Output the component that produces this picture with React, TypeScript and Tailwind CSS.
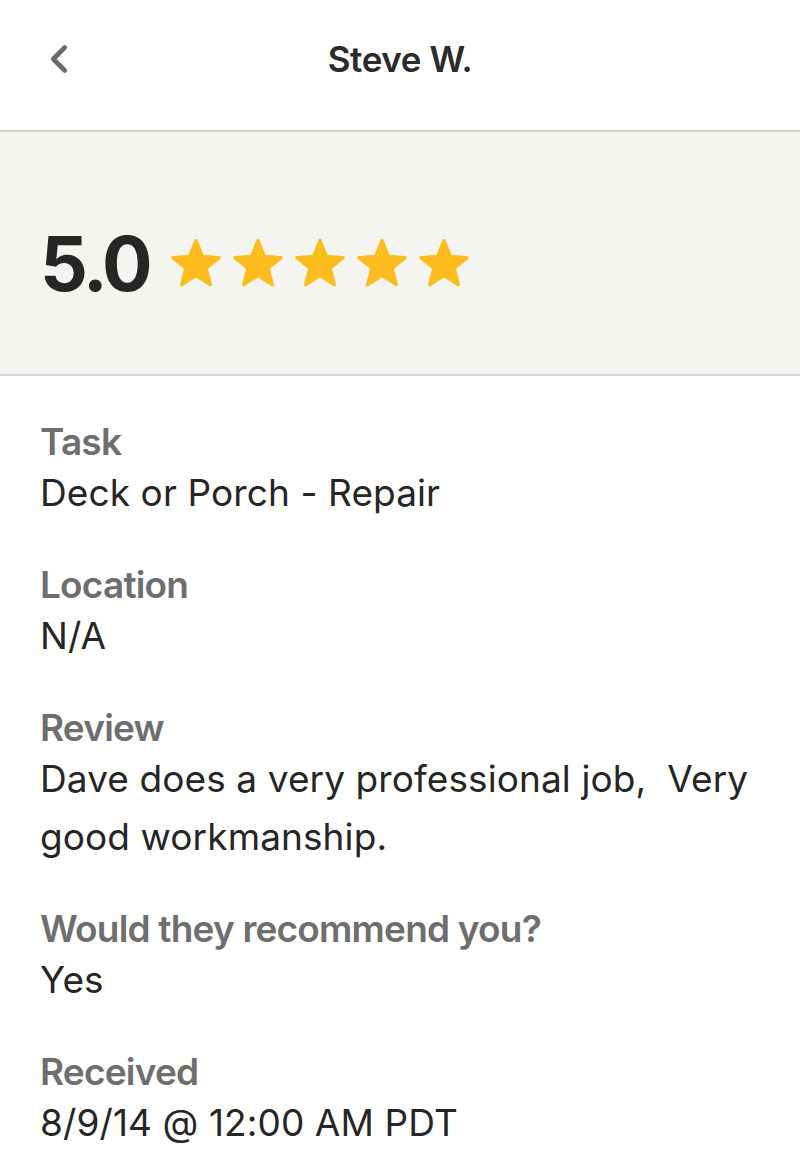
import { ChevronLeft } from "lucide-react";

const rows: { label: string; value: string }[] = [
  { label: "Task", value: "Deck or Porch - Repair" },
  { label: "Location", value: "N/A" },
  { label: "Review", value: "Dave does a very professional job,\u00a0 Very good workmanship." },
  { label: "Would they recommend you?", value: "Yes" },
  { label: "Received", value: "8/9/14 @ 12:00 AM PDT" },
];

function Star() {
  return (
    <svg viewBox="0 0 50 48" className="h-[48px] w-[50px]" aria-hidden>
      <path
        fill="#fdbd1e"
        stroke="#fdbd1e"
        strokeWidth="3.4"
        strokeLinejoin="round"
        d="M25 1.7L31.3 17.4 48.1 18.6 35.1 29.3 39.3 45.6 25 36.6 10.7 45.6 14.9 29.3 1.9 18.6 18.7 17.4z"
      />
    </svg>
  );
}

export default function App() {
  return (
    <div className="min-h-[1173px] w-[800px] bg-white font-['Inter',sans-serif] text-[#2a2a2a]">
      {/* Top bar */}
      <header className="relative flex h-[132px] items-center justify-center border-b-2 border-[#d3d3d3]">
        <ChevronLeft className="absolute left-[36px] top-[36px] h-[46px] w-[46px] text-[#6a6a6a]" strokeWidth={2.4} />
        <h1 className="-mt-[12px] text-[35px] font-semibold tracking-[-0.4px] text-[#2b2b2b]">Steve W.</h1>
      </header>

      {/* Rating band */}
      <section className="flex h-[244px] items-center gap-[22px] border-b-2 border-[#d6d6d6] bg-[#f4f4f1] px-[40px] pt-[20px]">
        <span className="text-[75px] font-bold leading-none tracking-[-3.5px] text-[#262626]">5.0</span>
        <div className="flex gap-[12px]">
          {[0, 1, 2, 3, 4].map((i) => (
            <Star key={i} />
          ))}
        </div>
      </section>

      {/* Details */}
      <main className="flex flex-col gap-[41px] px-[40px] pt-[44px]">
        {rows.map((r) => (
          <div key={r.label} className="flex flex-col">
            <span className="text-[37px] font-semibold leading-[44px] tracking-[-0.8px] text-[#6e6e6e]">{r.label}</span>
            <span className="text-[37px] font-normal leading-[58px] tracking-[0.1px] text-[#262626]">{r.value}</span>
          </div>
        ))}
      </main>
    </div>
  );
}
